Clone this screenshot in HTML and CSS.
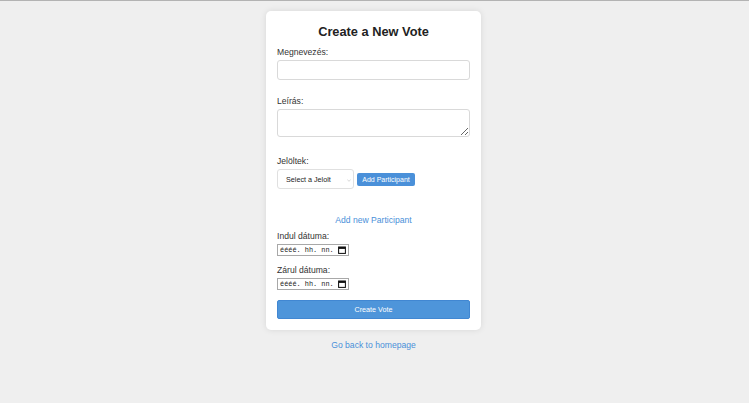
FILE: index.html
```html
<!DOCTYPE html>
<html lang="hu">
<head>
<meta charset="utf-8">
<title>Create a New Vote</title>
<link rel="stylesheet" href="styles.css">
</head>
<body>
<div class="topline"></div>
<main class="page">
  <form class="card">
    <h2 class="title">Create a New Vote</h2>
    <label class="label" for="name">Megnevezés:</label>
    <input class="field" id="name" type="text">
    <label class="label label-gap" for="desc">Leírás:</label>
    <textarea class="field area" id="desc"></textarea>
    <label class="label label-gap2" for="cand">Jelöltek:</label>
    <div class="cand-row">
      <div class="select" id="cand">Select a Jelolt<svg class="caret" viewBox="0 0 6 4" width="4" height="3"><path d="M0.5 0.8 L3 3.2 L5.5 0.8" fill="none" stroke="#bbb" stroke-width="0.9"/></svg></div>
      <button type="button" class="btn-small">Add Participant</button>
    </div>
    <a class="link add-link" href="#">Add new Participant</a>
    <label class="label">Indul dátuma:</label>
    <div class="date"><span class="date-text">éééé. hh. nn.</span><svg class="cal" viewBox="0 0 10 10" width="8" height="8"><rect x="0.75" y="1.25" width="8.5" height="8" fill="none" stroke="#111" stroke-width="1.3"/><rect x="0.75" y="1.25" width="8.5" height="2.4" fill="#111"/></svg></div>
    <label class="label label-gap3">Zárul dátuma:</label>
    <div class="date"><span class="date-text">éééé. hh. nn.</span><svg class="cal" viewBox="0 0 10 10" width="8" height="8"><rect x="0.75" y="1.25" width="8.5" height="8" fill="none" stroke="#111" stroke-width="1.3"/><rect x="0.75" y="1.25" width="8.5" height="2.4" fill="#111"/></svg></div>
    <button type="button" class="btn-main">Create Vote</button>
  </form>
  <a class="link back-link" href="#">Go back to homepage</a>
</main>
</body>
</html>
```
FILE: styles.css
```css
html, body {
  margin: 0;
  padding: 0;
}
body {
  background: #efefef;
  font-family: "Liberation Sans", Arial, sans-serif;
  color: #333;
  height: 403px;
  overflow: hidden;
}
.topline {
  height: 1px;
  background: #b3b3b3;
}
.page {
  display: flex;
  flex-direction: column;
  align-items: center;
  padding-top: 10px;
  padding-right: 2px;
}
.card {
  width: 193px;
  background: #fff;
  border-radius: 5px;
  box-shadow: 0 0 6px rgba(0,0,0,0.10);
  padding: 13px 11px 11px;
  display: flex;
  flex-direction: column;
}
.title {
  margin: 0 0 8px;
  font-size: 12.8px;
  line-height: 15px;
  font-weight: bold;
  text-align: center;
  color: #222;
}
.label {
  font-size: 8.6px;
  line-height: 10px;
  color: #333;
  margin-bottom: 3px;
}
.label-gap { margin-top: 16px; }
.label-gap2 { margin-top: 19px; }
.label-gap3 { margin-top: 9px; }
.field {
  box-sizing: border-box;
  width: 193px;
  height: 20px;
  border: 1px solid #d9d9d9;
  border-radius: 3px;
  margin: 0;
  padding: 3px 6px;
  font: inherit;
  font-size: 8.6px;
  background: #fff;
  outline: none;
  display: block;
}
.area {
  height: 28px;
  resize: vertical;
}
.cand-row {
  display: flex;
  align-items: center;
  gap: 3px;
}
.select {
  box-sizing: border-box;
  width: 77px;
  height: 20px;
  border: 1px solid #e0e0e0;
  border-radius: 3px;
  font-size: 7.2px;
  color: #222;
  display: flex;
  align-items: center;
  padding-left: 8px;
  position: relative;
}
.caret {
  position: absolute;
  right: 2px;
  top: 9px;
  display: block;
}
.btn-small {
  height: 13px;
  width: 58px;
  border: none;
  border-radius: 2px;
  background: #4a90d9;
  color: #fff;
  font-family: "Liberation Sans", Arial, sans-serif;
  font-size: 7px;
  padding: 0;
  line-height: 13px;
}
.link {
  color: #4a90d9;
  text-decoration: none;
  font-size: 8.6px;
  line-height: 10px;
}
.add-link {
  align-self: center;
  margin-top: 26px;
  margin-bottom: 6px;
}
.date {
  box-sizing: border-box;
  width: 72px;
  height: 12px;
  border: 1px solid #a8a8a8;
  display: flex;
  align-items: center;
  padding: 0 2px 0 2px;
  background: #fff;
}
.date-text {
  font-family: "Liberation Mono", monospace;
  font-size: 6.9px;
  color: #222;
  flex: 1;
}
.cal {
  display: block;
}
.btn-main {
  margin-top: 10px;
  height: 19px;
  width: 193px;
  border: 1px solid #4187d2;
  border-radius: 2px;
  background: #4e95da;
  color: #fff;
  font-family: "Liberation Sans", Arial, sans-serif;
  font-size: 7.2px;
  padding: 0;
}
.back-link {
  margin-top: 10px;
}
```
